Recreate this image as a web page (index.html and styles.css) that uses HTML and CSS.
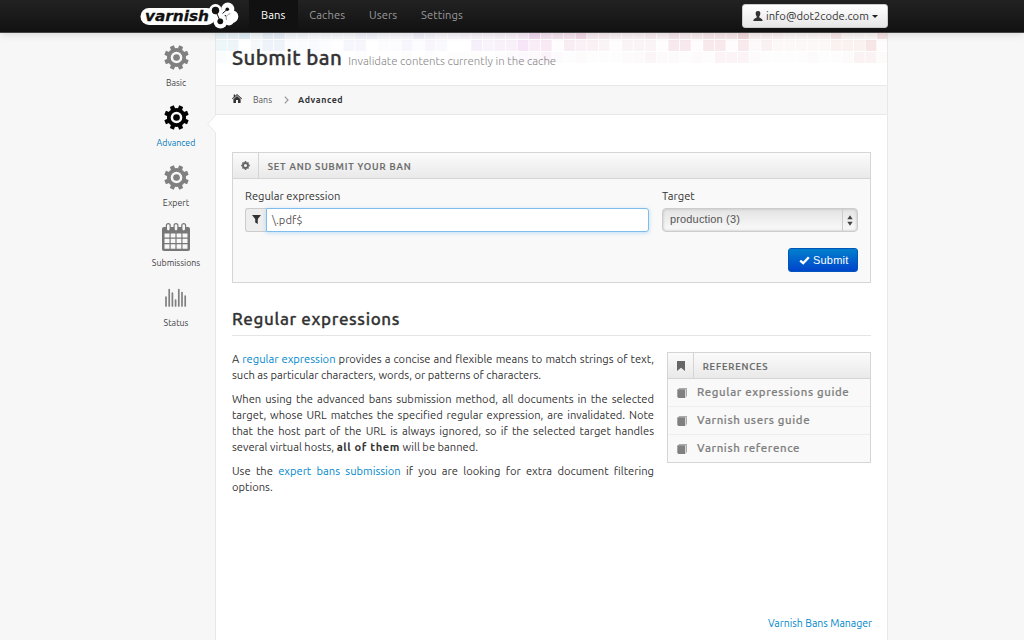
FILE: index.html
```html
<!DOCTYPE html>
<html lang="en">
<head>
<meta charset="utf-8">
<title>Varnish Bans Manager</title>
<link rel="stylesheet" href="styles.css">
</head>
<body>
<svg class="defs" width="0" height="0">
  <symbol id="gear" viewBox="-12 -12 24 24">
    <g fill="currentColor">
      <path id="tooth" d="M-2.2 -8L-2 -11.8H2L2.2 -8z" transform="rotate(22.5)"/>
      <use href="#tooth" transform="rotate(45)"/><use href="#tooth" transform="rotate(90)"/>
      <use href="#tooth" transform="rotate(135)"/><use href="#tooth" transform="rotate(180)"/>
      <use href="#tooth" transform="rotate(225)"/><use href="#tooth" transform="rotate(270)"/>
      <use href="#tooth" transform="rotate(315)"/>
      <circle r="3.2"/>
    </g>
    <circle r="7.4" fill="none" stroke="currentColor" stroke-width="3.6"/>
  </symbol>
  <symbol id="book" viewBox="0 0 10 11">
    <path d="M2 1h8v8l-1 1V2.2H1.3z" fill="#aaa"/><path d="M1 2.2h7.3V11H1.5L.3 10V2.6z" fill="#808080"/>
  </symbol>
</svg>
<header class="navbar">
  <div class="wrap">
    <svg class="logo" width="104" height="32" viewBox="136 0 104 32">
      <g fill="#fff"><rect x="140.500" y="8" width="75" height="17" rx="8.500"/>
      <circle cx="215.500" cy="10.500" r="6.500"/><circle cx="227.800" cy="9" r="6.500"/><circle cx="220.500" cy="21.500" r="7"/><circle cx="232" cy="16.500" r="6.300"/><circle cx="229" cy="20.500" r="5"/><circle cx="222" cy="14" r="3"/></g>
      <g fill="#111"><circle cx="215.500" cy="10.500" r="3.700"/><circle cx="227.300" cy="9.200" r="1.800"/><circle cx="220.300" cy="21.300" r="2.900"/></g>
      <path d="M215.500 10.500L220.300 21.300M227.300 9.200L222.500 13.500" stroke="#111" stroke-width="1" fill="none"/>
      <path d="M226.500 20c-1-3.500 1-6 4-6.300" stroke="#777" stroke-width=".8" fill="none"/>
      <text class="logo-text" x="145" y="20.500" textLength="64" lengthAdjust="spacingAndGlyphs">varnish</text>
    </svg>
    <nav class="nav"><a class="on">Bans</a><a>Caches</a><a>Users</a><a>Settings</a></nav>
    <button class="user">
      <svg width="10" height="10" viewBox="0 0 10 10"><path d="M5 0C3 0 2.500 1.300 2.700 3 2.900 4.600 3.600 5.300 3.800 5.800 3.900 7.300.6 7.200.3 10H9.700C9.400 7.200 6.100 7.300 6.200 5.800 6.400 5.300 7.100 4.600 7.300 3 7.500 1.300 7 0 5 0z" fill="#333"/></svg>
      <span>info@dot2code.com</span><i class="caret"></i>
    </button>
  </div>
</header>
<div class="page">
  <aside class="side">
    <a><svg class="g"><use href="#gear"/></svg><span>Basic</span></a>
    <a class="on"><svg class="g"><use href="#gear"/></svg><span>Advanced</span></a>
    <a><svg class="g"><use href="#gear"/></svg><span>Expert</span></a>
    <a><svg class="cal" width="28" height="28" viewBox="0 0 28 28"><path d="M2 4H26Q28 4 28 6V26Q28 28 26 28H2Q0 28 0 26V6Q0 4 2 4z" fill="#777"/><path d="M2.500 10.500h5v4h-5zM8.700 10.500h4.700v4H8.700zM14.600 10.500h4.700v4h-4.700zM20.500 10.500h5v4h-5zM2.500 15.700h5v4.300h-5zM8.700 15.700h4.700v4.300H8.700zM14.600 15.700h4.700v4.300h-4.700zM20.500 15.700h5v4.300h-5zM2.500 21.200h5v4.500h-5zM8.700 21.200h4.700v4.500H8.700zM14.600 21.200h4.700v4.500h-4.700zM20.500 21.200h5v4.500h-5z" fill="#f7f7f7"/><g fill="#f7f7f7" stroke="#777" stroke-width="1.200"><rect x="4.400" y=".6" width="3.800" height="7.400" rx="1.900"/><rect x="12.100" y=".6" width="3.800" height="7.400" rx="1.900"/><rect x="19.800" y=".6" width="3.800" height="7.400" rx="1.900"/></g></svg><span>Submissions</span></a>
    <a><svg class="bars" width="22" height="19" viewBox="0 0 22 19"><path d="M1 9V18M4.200 1.500V18M7.400 5V18M10.600 12V18M13.800 1.500V18M17 4.500V18M20.200 8V18" stroke="#808080" stroke-width="1.700" stroke-linecap="round"/></svg><span>Status</span></a>
  </aside>
  <main class="main">
    <svg class="arrow" width="9" height="18" viewBox="0 0 9 18"><path d="M9 0L.7 9L9 18z" fill="#fff"/><path d="M8.500 .5L.7 9L8.500 17.500" fill="none" stroke="#e8e8e8"/></svg>
    <div class="head">
      <svg class="mosaic" id="mosaic" width="671" height="31"></svg>
      <h1><span class="title">Submit ban</span><small>Invalidate contents currently in the cache</small></h1>
    </div>
    <div class="crumbs">
      <svg class="home" width="10" height="9" viewBox="0 0 10 9"><path d="M5 0L10 4.600L9.400 5.200L5 1.300L.6 5.200L0 4.600L1.700 3V.6H3V1.800zM5 2L8.600 5.200V9H6V6H4V9H1.400V5.200z" fill="#333"/></svg>
      <a>Bans</a>
      <svg width="5" height="8" viewBox="0 0 5 8"><path d="M.8 .6L4 4L.8 7.400" fill="none" stroke="#999" stroke-width="1.200"/></svg>
      <b>Advanced</b>
    </div>
    <div class="content">
      <section class="box form">
        <div class="bar"><i><svg width="9" height="9" viewBox="-4.500 -4.500 9 9"><circle r="2.500" fill="none" stroke="#666" stroke-width="1.900"/><path d="M0-4.400V-3M0 4.400V3M-4.400 0H-3M4.400 0H3M-3-3L-2.300-2.300M3-3L2.300-2.300M-3 3L-2.300 2.300M3 3L2.300 2.300" stroke="#666" stroke-width="1.500"/></svg></i><h2>SET AND SUBMIT YOUR BAN</h2></div>
        <div class="fields">
          <div class="f1"><label>Regular expression</label>
            <div class="input"><i><svg width="9" height="9" viewBox="0 0 9 9"><path d="M0 0H9L5.800 4V9L3.200 7.500V4z" fill="#333"/></svg></i><div class="val">\.pdf$</div></div></div>
          <div class="f2"><label>Target</label>
            <div class="select"><span>production (3)</span><i><svg width="6" height="11" viewBox="0 0 6 11"><path d="M3 .3L5.700 4.300H.3zM3 10.700L5.700 6.700H.3z" fill="#444"/></svg></i></div></div>
        </div>
        <button class="submit"><svg width="11" height="9" viewBox="0 0 11 9"><path d="M1.200 4.700L4.200 7.200L9.800 1.200" fill="none" stroke="#fff" stroke-width="2.400"/></svg><span>Submit</span></button>
      </section>
      <h3>Regular expressions</h3>
      <div class="cols">
        <div class="text">
          <p><span class="j">A <a>regular expression</a> provides a concise and flexible means to match strings of text,</span><span class="l">such as particular characters, words, or patterns of characters.</span></p>
          <p><span class="j">When using the advanced bans submission method, all documents in the selected</span><span class="j">target, whose URL matches the specified regular expression, are invalidated. Note</span><span class="j">that the host part of the URL is always ignored, so if the selected target handles</span><span class="l">several virtual hosts, <b>all of them</b> will be banned.</span></p>
          <p><span class="j">Use the <a>expert bans submission</a> if you are looking for extra document filtering</span><span class="l">options.</span></p>
        </div>
        <section class="box refs">
          <div class="bar"><i><svg width="8" height="10" viewBox="0 0 8 10"><path d="M0 0H8V10L4 6.800L0 10z" fill="#666"/></svg></i><h2>REFERENCES</h2></div>
          <a><svg width="10" height="11"><use href="#book"/></svg><span>Regular expressions guide</span></a>
          <a><svg width="10" height="11"><use href="#book"/></svg><span>Varnish users guide</span></a>
          <a><svg width="10" height="11"><use href="#book"/></svg><span>Varnish reference</span></a>
        </section>
      </div>
    </div>
    <footer><a>Varnish Bans Manager</a></footer>
  </main>
</div>
<script src="script.js"></script>
</body>
</html>
```
FILE: styles.css
```css
* { box-sizing: border-box; }
body { margin: 0; height: 640px; overflow: hidden; background: #f7f7f7; color: #333; font-family: Ubuntu, "Noto Sans", sans-serif; font-size: 11.17px; line-height: 16px; white-space: nowrap; }
h1, h2, h3, p { margin: 0; font-weight: 500; }
i { font-style: normal; display: flex; align-items: center; justify-content: center; }
svg { display: block; flex: none; }
.defs { position: absolute; }
a { color: #0088cc; }
.navbar { position: relative; z-index: 2; height: 33px; background: linear-gradient(#222, #111); border-bottom: 1px solid #444; box-shadow: 0 1px 8px rgba(0,0,0,.14); }
.wrap { width: 752px; margin-left: 136px; height: 32px; display: flex; align-items: center; }
.logo-text { font: italic bold 13.5px "DejaVu Sans", sans-serif; fill: #111; stroke: #111; stroke-width: .3px; }
.nav { display: flex; margin-left: 9px; height: 32px; }
.nav a { padding: 0 12px; line-height: 31px; color: #999; font-size: 11.2px; letter-spacing: .1px; }
.nav a + a { padding-left: 11.8px; }
.nav .on { background: #111; color: #fff; }
.user { margin-left: auto; width: 146px; height: 24px; display: flex; align-items: center; padding: 0 9px 0 10px; gap: 3px; border: 1px solid #ccc; border-radius: 3px; background: linear-gradient(#fff, #e6e6e6); font: 11.2px Ubuntu, "Noto Sans", sans-serif; color: #333; white-space: nowrap; }
.caret { border: 3px solid transparent; border-top-color: #222; border-bottom: 0; }
.page { display: flex; height: 607px; }
.side { width: 215px; padding: 12px 0 0 137px; }
.side a { width: 78px; height: 60px; display: flex; flex-direction: column; align-items: center; color: #444; font-size: 8.8px; line-height: 12px; }
.side span { margin-top: auto; margin-bottom: 16px; }
.g { width: 25px; height: 25px; color: #808080; }
.side .on { color: #0077bb; }
.on .g { color: #000; }
.cal { margin-top: -2px; }
.bars { margin-top: 3px; }
.main { position: relative; width: 673px; background: #fff; border: solid #e8e8e8; border-width: 0 1px; display: flex; flex-direction: column; }
.arrow { position: absolute; left: -9px; top: 82px; }
.head { position: relative; height: 53px; padding: 9px 0 0 16px; border-bottom: 1px solid #e8e8e8; }
.mosaic { position: absolute; left: 0; top: 0; }
h1 { position: relative; display: flex; align-items: baseline; gap: 6px; font-size: 20.5px; line-height: 32px; }
.title { letter-spacing: .42px; -webkit-text-stroke: .35px #333; }
h1 small { font-size: 11.45px; font-weight: 300; color: #888; }
.crumbs { height: 29px; padding: 0 0 1px 16px; display: flex; align-items: center; background: #f7f7f7; border-bottom: 1px solid #e8e8e8; font-size: 8.8px; }
.home { margin-bottom: 3px; }
.crumbs a { color: #555; margin: 0 12px 0 11px; }
.crumbs b { margin-left: 9px; font-weight: 600; letter-spacing: .6px; }
.content { padding: 37px 16px 0; }
.box { border: 1px solid #d5d5d5; background: #f9f9f9; }
.form { height: 131px; }
.bar { height: 26px; display: flex; background: linear-gradient(#fbfbfb, #e9e9e9); border-bottom: 1px solid #d5d5d5; color: #666; }
.bar i { width: 26px; border-right: 1px solid #d5d5d5; }
.bar h2 { margin-left: 8.7px; padding-top: 1px; font-size: 9.5px; line-height: 26px; letter-spacing: .85px; font-weight: 500; -webkit-text-stroke: .2px #666; }
.fields { display: flex; gap: 13px; padding: 10px 12px 0; }
label { display: block; height: 19px; line-height: 15px; }
.f1 { width: 404px; }
.f2 { width: 196px; }
.input { display: flex; height: 24px; }
.input i { width: 21px; padding: 0 0 2px 1px; background: #eee; border: 1px solid #ccc; border-right: 0; border-radius: 3px 0 0 3px; }
.val { flex: 1; background: #fff; border: 1px solid #80bdec; border-radius: 0 3px 3px 0; padding-left: 5px; line-height: 22px; color: #555; box-shadow: 0 1px 4px rgba(82,168,236,.35); }
.select { display: flex; justify-content: space-between; height: 24px; border: 1px solid #ccc; border-radius: 4px; background: linear-gradient(#e4e4e4, #fafafa); box-shadow: inset 0 0 3px #bbb; padding-left: 7px; font: 11px/21px "Liberation Sans", sans-serif; color: #555; letter-spacing: .15px; }
.select i { width: 15px; border-left: 1px solid #ccc; }
.submit { display: flex; align-items: center; gap: 3px; margin: 16px 12px 0 auto; width: 70px; height: 24px; padding: 0 0 0 10px; border: 1px solid #0055bb; border-radius: 3px; background: linear-gradient(#0080cc, #0044cc); color: #fff; font: 11px "Liberation Sans", sans-serif; letter-spacing: .2px; }
h3 { margin-top: 25px; height: 28px; border-bottom: 1px solid #e5e5e5; font-size: 17px; line-height: 21px; letter-spacing: .62px; -webkit-text-stroke: .3px #333; }
.cols { display: flex; justify-content: space-between; margin-top: 16px; }
.text { width: 422px; margin-top: -1px; }
.text p { margin-bottom: 8px; font-weight: 400; }
.text b { font-weight: 600; letter-spacing: .6px; }
.j, .l { display: block; }
.j { text-align: justify; text-align-last: justify; white-space: normal; height: 16px; }
.refs { width: 204px; height: 111px; }
.refs > a { display: flex; align-items: center; gap: 10px; height: 28px; padding: 0 0 1px 9px; border-bottom: 1px solid #eee; color: #808080; font-size: 11.4px; font-weight: 500; letter-spacing: .63px; -webkit-text-stroke: .2px #808080; }
.refs > a svg { margin-top: 1px; }
.refs > a:last-child { height: 27px; padding-bottom: 1px; border: 0; }
footer { margin: auto 15px 9px auto; font-size: 10.5px; }
```
FILE: script.js
```js
// Three rows of tinted tiles; each digit is the tile's strength.
const rows = [
  "4452442222223322243223333348666844333435445558333222252226",
  "4402441121033011313200544475615443133316616616242222244471",
  "2100210010001000101011101233521211122422121555211112112552"
];
const tops = [0, 7, 19], heights = [6, 11, 11], fade = [1, .75, .5];
const stops = [[0, 195], [14, 240], [26, 300], [32, 335], [45, 347], [57, 363]];
function hue(c) {
  for (let i = 1; i < stops.length; i++) {
    const [a, h] = stops[i - 1], [b, k] = stops[i];
    if (c <= b) return h + (k - h) * (c - a) / (b - a);
  }
  return 0;
}
let out = "";
rows.forEach((row, r) => [...row].forEach((d, c) => {
  const base = c < 8 ? .042 : c < 24 ? .028 : .033;
  out += `<rect x="${(c * 11.6).toFixed(1)}" y="${tops[r]}" width="10.8" height="${heights[r]}" fill="hsl(${hue(c).toFixed(0)},50%,62%)" opacity="${(d * base * fade[r]).toFixed(3)}"/>`;
}));
document.getElementById("mosaic").innerHTML = out;
```
